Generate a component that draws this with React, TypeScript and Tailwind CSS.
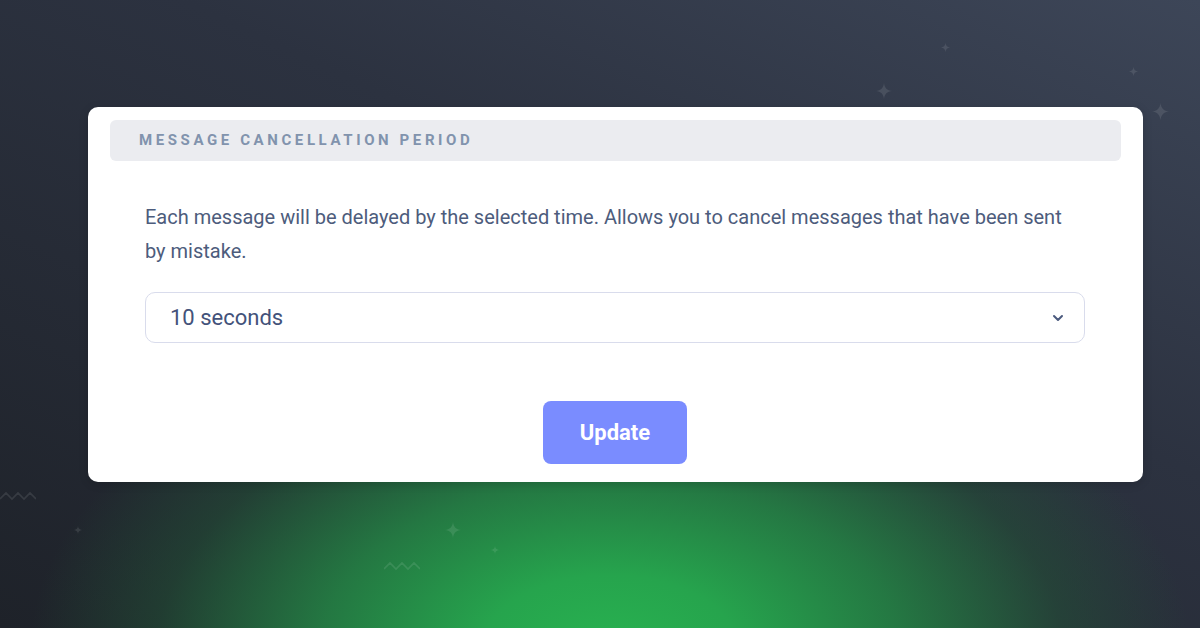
import { ChevronDown } from "lucide-react"

function Sparkle({ className }: { className: string }) {
  return (
    <svg viewBox="0 0 24 24" className={`absolute ${className}`} fill="currentColor">
      <path d="M12 0 C12.8 7.5 16.5 11.2 24 12 C16.5 12.8 12.8 16.5 12 24 C11.2 16.5 7.5 12.8 0 12 C7.5 11.2 11.2 7.5 12 0 Z" />
    </svg>
  )
}

function Zigzag({ className }: { className: string }) {
  return (
    <svg viewBox="0 0 36 10" className={`absolute ${className}`} fill="none" stroke="currentColor" strokeWidth="1.6">
      <path d="M0 8 L6 2 L12 8 L18 2 L24 8 L30 2 L36 8" />
    </svg>
  )
}

export default function App() {
  return (
    <div
      className="relative w-[1200px] h-[628px] overflow-hidden bg-[radial-gradient(ellipse_580px_340px_at_610px_650px,#28b250_0%,#26a44d_22%,rgba(36,128,68,0.9)_50%,rgba(34,85,55,0.5)_78%,transparent_100%),linear-gradient(205deg,#3d4658_0%,#2c3240_40%,#1e2229_100%)] pt-[107px] pl-[88px]"
      style={{ fontFamily: "Roboto, 'Liberation Sans', sans-serif" }}
    >
      {/* background decorations */}
      <Sparkle className="left-[876px] top-[83px] w-[16px] h-[16px] text-white/10" />
      <Sparkle className="left-[941px] top-[43px] w-[9px] h-[9px] text-white/10" />
      <Sparkle className="left-[1129px] top-[67px] w-[9px] h-[9px] text-white/10" />
      <Sparkle className="left-[1152px] top-[103px] w-[17px] h-[17px] text-white/10" />
      <Sparkle className="left-[74px] top-[526px] w-[8px] h-[8px] text-white/10" />
      <Sparkle className="left-[445px] top-[522px] w-[16px] h-[16px] text-white/10" />
      <Sparkle className="left-[491px] top-[546px] w-[8px] h-[8px] text-white/10" />
      <Zigzag className="left-[0px] top-[491px] w-[36px] h-[10px] text-white/10" />
      <Zigzag className="left-[384px] top-[561px] w-[36px] h-[10px] text-white/10" />

      <div className="relative w-[1055px] h-[375px] rounded-[10px] bg-white pt-[13px] shadow-[0_2px_10px_rgba(0,0,0,0.15)]">
        <div className="mx-[22px] h-[41px] rounded-[6px] bg-[#ebecf0] pl-[29px] flex items-center">
          <span className="text-[15px] font-bold tracking-[3.6px] text-[#8193ad]">MESSAGE CANCELLATION PERIOD</span>
        </div>

        <div className="pl-[57px] pr-[58px] pt-[39px]">
          <p className="text-[20px] leading-[34px] text-[#4d5c7c]">
            Each message will be delayed by the selected time. Allows you to cancel messages that have been sent by mistake.
          </p>

          <div className="mt-[24px] h-[51px] rounded-[10px] border border-[#d9dcec] flex items-center justify-between pl-[24px] pr-[18px]">
            <span className="text-[22px] text-[#43527a]">10 seconds</span>
            <ChevronDown className="w-[16px] h-[16px] text-[#4b5a7e]" strokeWidth={3} />
          </div>

          <div className="mt-[58px] flex justify-center">
            <button className="w-[144px] h-[63px] rounded-[8px] bg-[#7a8cff] text-white text-[22px] font-bold">
              Update
            </button>
          </div>
        </div>
      </div>
    </div>
  )
}
